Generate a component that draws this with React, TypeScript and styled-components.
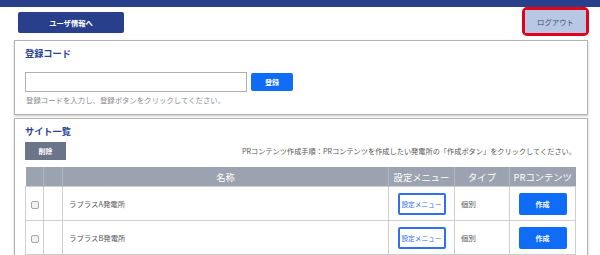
import styled, { createGlobalStyle } from 'styled-components';

const GlobalStyle = createGlobalStyle`
    html, body {
        margin: 0;
        padding: 0;
        background: #ffffff;
        font-family: "Noto Sans CJK JP", "Noto Sans", sans-serif;
        color: #555;
    }
`;

interface Site {
    name: string;
    type: string;
}

const sites: Site[] = [
    { name: 'ラプラスA発電所', type: '個別' },
    { name: 'ラプラスB発電所', type: '個別' },
];

const App = () => {
    return (
        <Page>
            <GlobalStyle />
            <TopBar />
            <Toolbar>
                <UserButton>ユーザ情報へ</UserButton>
                <Highlight>
                    <LogoutButton>ログアウト</LogoutButton>
                </Highlight>
            </Toolbar>

            <Panel>
                <PanelTitle>登録コード</PanelTitle>
                <CodeRow>
                    <CodeInput />
                    <PrimaryButton $w={42} $h={18}>登録</PrimaryButton>
                </CodeRow>
                <Hint>登録コードを入力し、登録ボタンをクリックしてください。</Hint>
            </Panel>

            <Panel $tight>
                <PanelTitle>サイト一覧</PanelTitle>
                <ActionRow>
                    <DeleteButton>削除</DeleteButton>
                    <Note>PRコンテンツ作成手順：PRコンテンツを作成したい発電所の「作成ボタン」をクリックしてください。</Note>
                </ActionRow>
                <Table>
                    <colgroup>
                        <col style={{ width: 18 }} />
                        <col style={{ width: 19 }} />
                        <col />
                        <col style={{ width: 66 }} />
                        <col style={{ width: 55 }} />
                        <col style={{ width: 66 }} />
                    </colgroup>
                    <thead>
                        <tr>
                            <Th />
                            <Th />
                            <Th>名称</Th>
                            <Th>設定メニュー</Th>
                            <Th>タイプ</Th>
                            <Th>PRコンテンツ</Th>
                        </tr>
                    </thead>
                    <tbody>
                        {sites.map((site) => (
                            <tr key={site.name}>
                                <Td $center>
                                    <Check type="checkbox" />
                                </Td>
                                <Td />
                                <Td>{site.name}</Td>
                                <Td $center>
                                    <OutlineButton>設定メニュー</OutlineButton>
                                </Td>
                                <Td>{site.type}</Td>
                                <Td $center>
                                    <PrimaryButton $w={48} $h={22}>作成</PrimaryButton>
                                </Td>
                            </tr>
                        ))}
                    </tbody>
                </Table>
            </Panel>
        </Page>
    );
};

const Page = styled.div`
    width: 600px;
    height: 255px;
    overflow: hidden;
`;

const TopBar = styled.div`
    height: 7px;
    background: #283f8b;
`;

const Toolbar = styled.div`
    display: flex;
    justify-content: space-between;
    align-items: flex-start;
    height: 33px;
    padding: 0 11px 0 18px;
`;

const UserButton = styled.button`
    margin-top: 5px;
    width: 106px;
    height: 21px;
    border: none;
    border-radius: 2px;
    background: #28408c;
    color: #ffffff;
    font-family: inherit;
    font-size: 7.3px;
    font-weight: bold;
    padding: 0;
`;

const Highlight = styled.div`
    display: flex;
    border: 3px solid #e5001a;
    border-radius: 5px;
`;

const LogoutButton = styled.button`
    width: 61px;
    height: 23px;
    border: none;
    background: #b8c7e4;
    color: #4a4f5a;
    font-family: inherit;
    font-size: 7.4px;
    padding: 0;
`;

const Panel = styled.section<{ $tight?: boolean }>`
    margin: ${({ $tight }) => ($tight ? '3px' : '0')} 12px 0 14px;
    border: 1px solid #b4b4b4;
    box-shadow: 0 1px 2px rgba(0, 0, 0, 0.25);
    padding: ${({ $tight }) => ($tight ? '5px' : '5px')} 10px 8px;
`;

const PanelTitle = styled.h2`
    margin: 0;
    font-size: 9.2px;
    line-height: 14px;
    font-weight: bold;
    color: #2a4490;
`;

const CodeRow = styled.div`
    display: flex;
    align-items: center;
    gap: 4px;
    margin-top: 12px;
`;

const CodeInput = styled.input`
    box-sizing: border-box;
    width: 222px;
    height: 20px;
    border: 1px solid #b0b0b0;
    margin: 0;
    padding: 0 4px;
`;

const PrimaryButton = styled.button<{ $w: number; $h: number }>`
    width: ${({ $w }) => $w}px;
    height: ${({ $h }) => $h}px;
    border: none;
    border-radius: 2px;
    background: #0e6cf6;
    color: #ffffff;
    font-family: inherit;
    font-size: 7px;
    font-weight: bold;
    padding: 0;
`;

const Hint = styled.p`
    margin: 2px 0 0 1px;
    font-size: 7.4px;
    line-height: 12px;
    color: #8a8a8a;
`;

const ActionRow = styled.div`
    display: flex;
    justify-content: space-between;
    align-items: center;
    margin-top: 4px;
`;

const DeleteButton = styled.button`
    width: 41px;
    height: 18px;
    border: none;
    background: #6b7489;
    color: #ffffff;
    font-family: inherit;
    font-size: 7px;
    font-weight: bold;
    padding: 0;
`;

const Note = styled.span`
    font-size: 7.2px;
    color: #555;
    padding-right: 1px;
`;

const Table = styled.table`
    width: 551px;
    margin-top: 7px;
    border-collapse: collapse;
    table-layout: fixed;
`;

const Th = styled.th`
    height: 19px;
    padding: 0;
    background: #9ca3b0;
    color: #ffffff;
    font-size: 9.3px;
    font-weight: normal;
    text-align: center;
    border-left: 1px solid #b3b9c3;
    &:first-child {
        border-left: none;
    }
`;

const Td = styled.td<{ $center?: boolean }>`
    height: 33px;
    padding: 0 0 0 ${({ $center }) => ($center ? '0' : '6px')};
    border: 1px solid #cfcfcf;
    font-size: 7.4px;
    color: #555;
    text-align: ${({ $center }) => ($center ? 'center' : 'left')};
`;

const Check = styled.input`
    appearance: none;
    box-sizing: border-box;
    width: 8px;
    height: 8px;
    margin: 0;
    vertical-align: middle;
    border: 1px solid #a8a8a8;
    border-radius: 2px;
    background: #f2f2f2;
`;

const OutlineButton = styled.button`
    width: 48px;
    height: 22px;
    border: 2px solid #2f6ff0;
    border-radius: 2px;
    background: #ffffff;
    color: #2f6ff0;
    font-family: inherit;
    font-size: 6.7px;
    padding: 0;
`;

export default App;
